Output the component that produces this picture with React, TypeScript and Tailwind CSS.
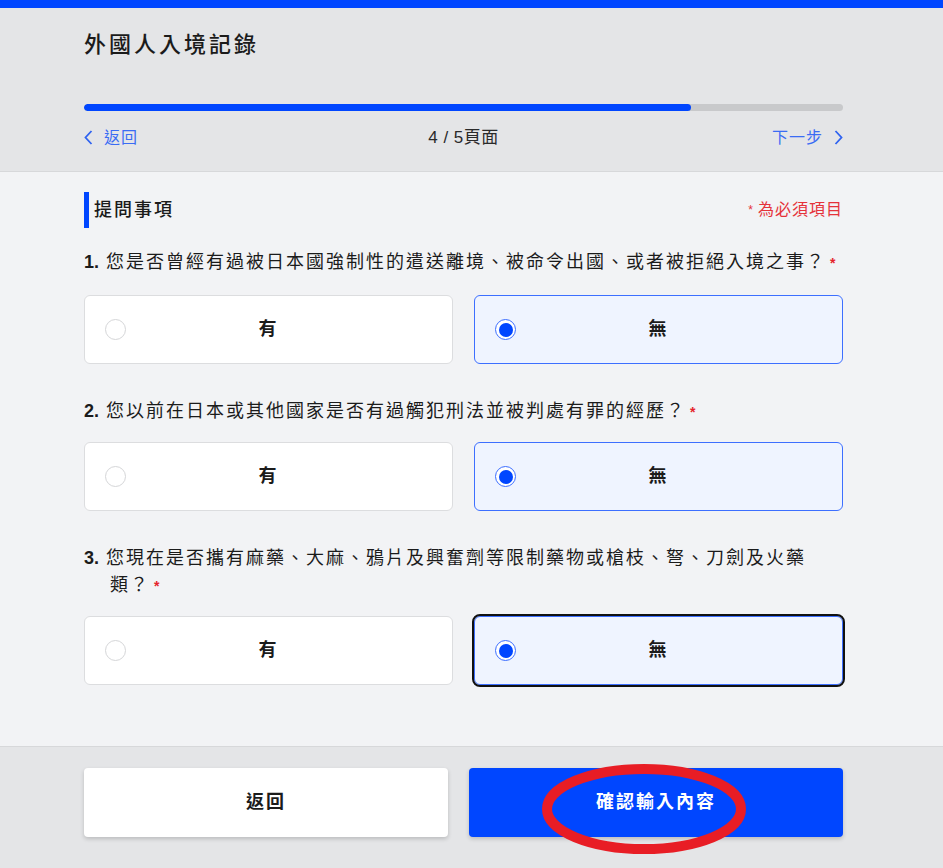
import React from "react";

const FONT = { fontFamily: '"Liberation Sans", "Noto Sans CJK TC", sans-serif' };

function Radio({ checked }: { checked: boolean }) {
  if (checked) {
    return (
      <span className="flex h-[21px] w-[21px] items-center justify-center rounded-full border-[1.5px] border-[#3b6dff] bg-white">
        <span className="h-[14px] w-[14px] rounded-full bg-[#0046ff]" />
      </span>
    );
  }
  return <span className="block h-[21px] w-[21px] rounded-full border border-[#d5d6d8] bg-white" />;
}

function Option({ label, checked, focused }: { label: string; checked: boolean; focused?: boolean }) {
  const base = "grid h-[69px] grid-cols-[1fr_auto_1fr] items-center rounded-md border px-[20px]";
  const cls = checked
    ? `${base} border-[#3d6fff] bg-[#eff4ff]` + (focused ? " outline-2 outline-offset-0 outline-[#111111]" : "")
    : `${base} border-[#dcdddf] bg-white`;
  return (
    <div className={cls}>
      <span className="justify-self-start">
        <Radio checked={checked} />
      </span>
      <span className="text-[18px] font-bold tracking-[2px] text-[#1b1b1b]">{label}</span>
      <span />
    </div>
  );
}

function Question({ num, text }: { num: string; text: string }) {
  return (
    <p className="-indent-[26px] pl-[26px] text-[18px] leading-[27px] text-[#1b1b1b]">
      <span className="inline-block w-[22px] indent-0 font-bold">{num}.</span>
      <span className="tracking-[2px]">{text}</span>
      <span className="ml-[4px] text-[14px] font-bold text-[#e5232b]">*</span>
    </p>
  );
}

export default function App() {
  const qs = [
    { num: "1", text: "您是否曾經有過被日本國強制性的遣送離境、被命令出國、或者被拒絕入境之事？", mt: "mt-[21px]", gap: "mt-[18px]" },
    { num: "2", text: "您以前在日本或其他國家是否有過觸犯刑法並被判處有罪的經歷？", mt: "mt-[34px]", gap: "mt-[16px]" },
    { num: "3", text: "您現在是否攜有麻藥、大麻、鴉片及興奮劑等限制藥物或槍枝、弩、刀劍及火藥類？", mt: "mt-[34px]", gap: "mt-[16px]" },
  ];
  return (
    <div className="relative min-h-[868px] w-[943px] bg-[#f2f3f5]" style={FONT}>
      <div className="h-2 bg-[#0046ff]" />
      <header className="border-b border-[#d7d8da] bg-[#e4e5e7]">
        <div className="ml-[84px] w-[759px] pb-[22px] pt-[22px]">
          <h1 className="h-[30px] text-[22px] font-medium leading-[30px] tracking-[3px] text-[#1b1b1b]">外國人入境記錄</h1>
          <div className="mt-[44px] h-[7px] overflow-hidden rounded-full bg-[#c8c9cb]">
            <div className="h-full w-[80%] rounded-full bg-[#0046ff]" />
          </div>
          <div className="mt-[14px] grid h-[24px] grid-cols-3 items-center text-[16px]">
            <div className="flex items-center gap-[11px] text-[#3a6cf4]">
              <svg width="9" height="15" viewBox="0 0 9 15" fill="none">
                <path d="M7.5 1 L1.5 7.5 L7.5 14" stroke="#2f63f0" strokeWidth="1.8" />
              </svg>
              <span className="tracking-[1px]">返回</span>
            </div>
            <div className="text-center text-[17px] tracking-[0.5px] text-[#2a2a2a]">4 / 5頁面</div>
            <div className="flex items-center justify-end gap-[11px] text-[#3a6cf4]">
              <span className="tracking-[1px]">下一步</span>
              <svg width="9" height="15" viewBox="0 0 9 15" fill="none">
                <path d="M1.5 1 L7.5 7.5 L1.5 14" stroke="#2f63f0" strokeWidth="1.8" />
              </svg>
            </div>
          </div>
        </div>
      </header>

      <main className="bg-[#f2f3f5] pb-[61px] pt-[20px]">
        <div className="ml-[84px] w-[759px]">
          <div className="flex h-[36px] items-center justify-between">
            <div className="flex h-full items-center">
              <span className="h-full w-[5px] bg-[#0046ff]" />
              <span className="ml-[5px] text-[18px] font-medium tracking-[2px] text-[#1b1b1b]">提問事項</span>
            </div>
            <div className="flex items-center text-[16px] tracking-[1px] text-[#e5323a]">
              <span className="mr-[4px] text-[12px]">*</span>為必須項目
            </div>
          </div>
          {qs.map((q, i) => (
            <div key={q.num} className={q.mt}>
              <Question num={q.num} text={q.text} />
              <div className={`grid grid-cols-2 gap-[21px] ${q.gap}`}>
                <Option label="有" checked={false} />
                <Option label="無" checked={true} focused={i === 2} />
              </div>
            </div>
          ))}
        </div>
      </main>

      <footer className="border-t border-[#d7d8da] bg-[#e4e5e7] pb-[32px] pt-[21px]">
        <div className="ml-[84px] flex w-[759px] gap-[21px]">
          <button className="h-[69px] w-[364px] rounded bg-white text-[18px] font-bold tracking-[2px] text-[#1b1b1b] shadow-[0_2px_4px_rgba(0,0,0,0.18)]">
            返回
          </button>
          <button className="h-[69px] flex-1 rounded bg-[#0046ff] text-[18px] font-bold tracking-[2px] text-white shadow-[0_2px_4px_rgba(0,0,0,0.18)]">
            確認輸入內容
          </button>
        </div>
      </footer>

      <svg className="pointer-events-none absolute left-[537px] top-[758px]" width="214" height="102" viewBox="0 0 214 102">
        <ellipse cx="107" cy="51" rx="97" ry="40" fill="none" stroke="#e81d25" strokeWidth="10" />
      </svg>
    </div>
  );
}
